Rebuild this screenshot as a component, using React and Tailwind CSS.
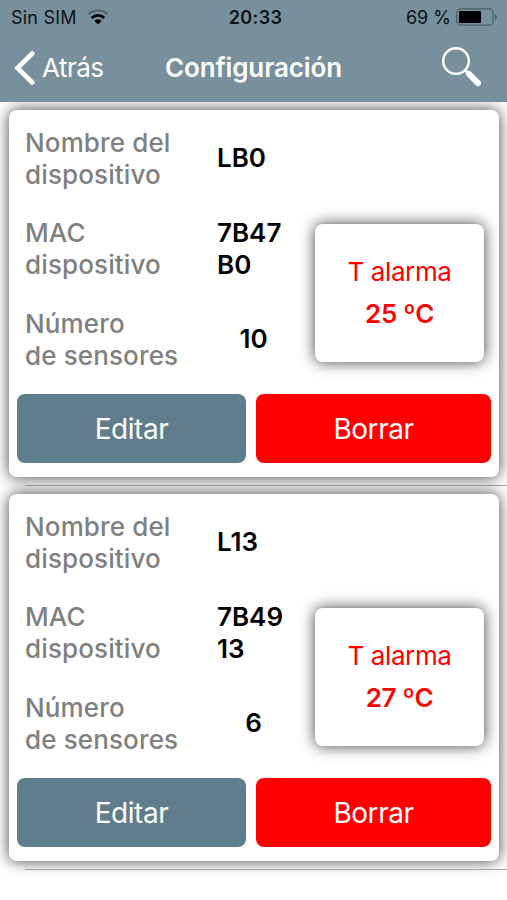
import React from 'react';

const dispositivos = [
  { nombre: 'LB0', mac: ['7B47', 'B0'], sensores: 10, alarma: 25 },
  { nombre: 'L13', mac: ['7B49', '13'], sensores: 6, alarma: 27 },
];

function StatusBar() {
  return (
    <div className="grid h-[34px] grid-cols-3 items-center pl-[11px] pr-[9px] text-[18px] text-[#0d1418]">
      <div className="flex items-center gap-[10px]">
        <span className="tracking-[0.2px]">Sin SIM</span>
        <svg width="22" height="16" viewBox="0 0 22 16" fill="none">
          <path d="M1.5 5.2C6.9 0.3 15.1 0.3 20.5 5.2" stroke="#55686f" strokeWidth="2.4" />
          <path d="M4.7 8.9C8.3 5.5 13.7 5.5 17.3 8.9" stroke="#000" strokeWidth="2.8" />
          <path d="M11 15.5L7.4 12C9.4 10.1 12.6 10.1 14.6 12Z" fill="#000" />
        </svg>
      </div>
      <span className="pl-[2px] text-center font-semibold tracking-[0.4px]">20:33</span>
      <div className="flex items-center justify-end gap-[5px]">
        <span className="whitespace-nowrap">69 %</span>
        <svg width="42" height="18" viewBox="0 0 42 18">
          <rect x="0.8" y="0.8" width="36.4" height="16.4" rx="4" fill="none" stroke="#4b5e67" strokeWidth="1.2" />
          <rect x="3" y="3" width="22" height="12" rx="1" fill="#000" />
          <path d="M39 6C41.5 7 41.5 11 39 12Z" fill="#4b5e67" />
        </svg>
      </div>
    </div>
  );
}

function NavBar() {
  return (
    <div className="grid h-[68px] grid-cols-[140px_1fr_140px] items-center pb-px text-[26px] text-white">
      <div className="flex items-center gap-[7px] pl-[14px]">
        <svg width="21" height="34" viewBox="0 0 21 34" fill="none">
          <path d="M18.2 2.5L3.5 17L18.2 31.5" stroke="#fff" strokeWidth="4.6" strokeLinecap="round" />
        </svg>
        <span className="tracking-[-0.5px]">Atrás</span>
      </div>
      <h1 className="text-center font-semibold tracking-[-0.15px]">Configuración</h1>
      <div className="flex justify-end pr-[24px]">
        <svg width="42" height="42" viewBox="0 0 42 42" fill="none" className="-mt-px">
          <circle cx="15" cy="15" r="12.8" stroke="#fff" strokeWidth="2.4" />
          <path d="M24 24L28 28" stroke="#fff" strokeWidth="3" />
          <path d="M28 28L37 37.2" stroke="#fff" strokeWidth="6" strokeLinecap="round" />
        </svg>
      </div>
    </div>
  );
}

function Campo({ titulo, children }) {
  return (
    <div className="grid grid-cols-[192px_1fr] items-center">
      <div className="font-medium tracking-[0.13px] text-[#808080]">
        {titulo.map((linea) => (
          <div key={linea}>{linea}</div>
        ))}
      </div>
      <div className="-mt-px font-semibold text-black">{children}</div>
    </div>
  );
}

function Dispositivo({ nombre, mac, sensores, alarma }) {
  return (
    <li className="relative h-[384px] pt-[8px] pr-[8px] pl-[9px]">
      <article className="h-[367px] rounded-[8px] bg-white px-[8px] pt-[17px] shadow-[0_0_15px_rgba(0,0,0,0.75)]">
        <div className="flex pl-[8px] text-[26px] leading-[31.7px]">
          <div className="flex w-[290px] flex-col gap-[27px]">
            <Campo titulo={['Nombre del', 'dispositivo']}>{nombre}</Campo>
            <Campo titulo={['MAC', 'dispositivo']}>
              {mac.map((parte) => (
                <div key={parte}>{parte}</div>
              ))}
            </Campo>
            <Campo titulo={['Número', 'de sensores']}>
              <div className="w-[73px] text-center">{sensores}</div>
            </Campo>
          </div>
          <div className="mt-[97px] flex h-[138px] w-[169px] flex-col items-center justify-center gap-[10px] rounded-[8px] bg-white text-[#ff0000] shadow-[0_0_15px_rgba(0,0,0,0.75)]">
            <span className="tracking-[-0.4px]">T alarma</span>
            <span className="font-semibold tracking-[-0.3px]">{alarma} ºC</span>
          </div>
        </div>
        <div className="mt-[23px] grid h-[69px] grid-cols-[229px_235px] gap-[10px] text-[28px] tracking-[-0.45px] text-white">
          <button className="rounded-[8px] bg-[#607d8b]">Editar</button>
          <button className="rounded-[8px] bg-[#ff0000]">Borrar</button>
        </div>
      </article>
      <div className="absolute right-0 bottom-0 left-[25px] h-px bg-[#a8a8a8]" />
    </li>
  );
}

export default function App() {
  return (
    <div className="h-[900px] w-[507px] overflow-hidden bg-white font-['Inter',sans-serif]">
      <header className="relative z-10 bg-[#78909c]">
        <StatusBar />
        <NavBar />
      </header>
      <ul className="isolate">
        {dispositivos.map((d) => (
          <Dispositivo key={d.nombre} {...d} />
        ))}
      </ul>
    </div>
  );
}
